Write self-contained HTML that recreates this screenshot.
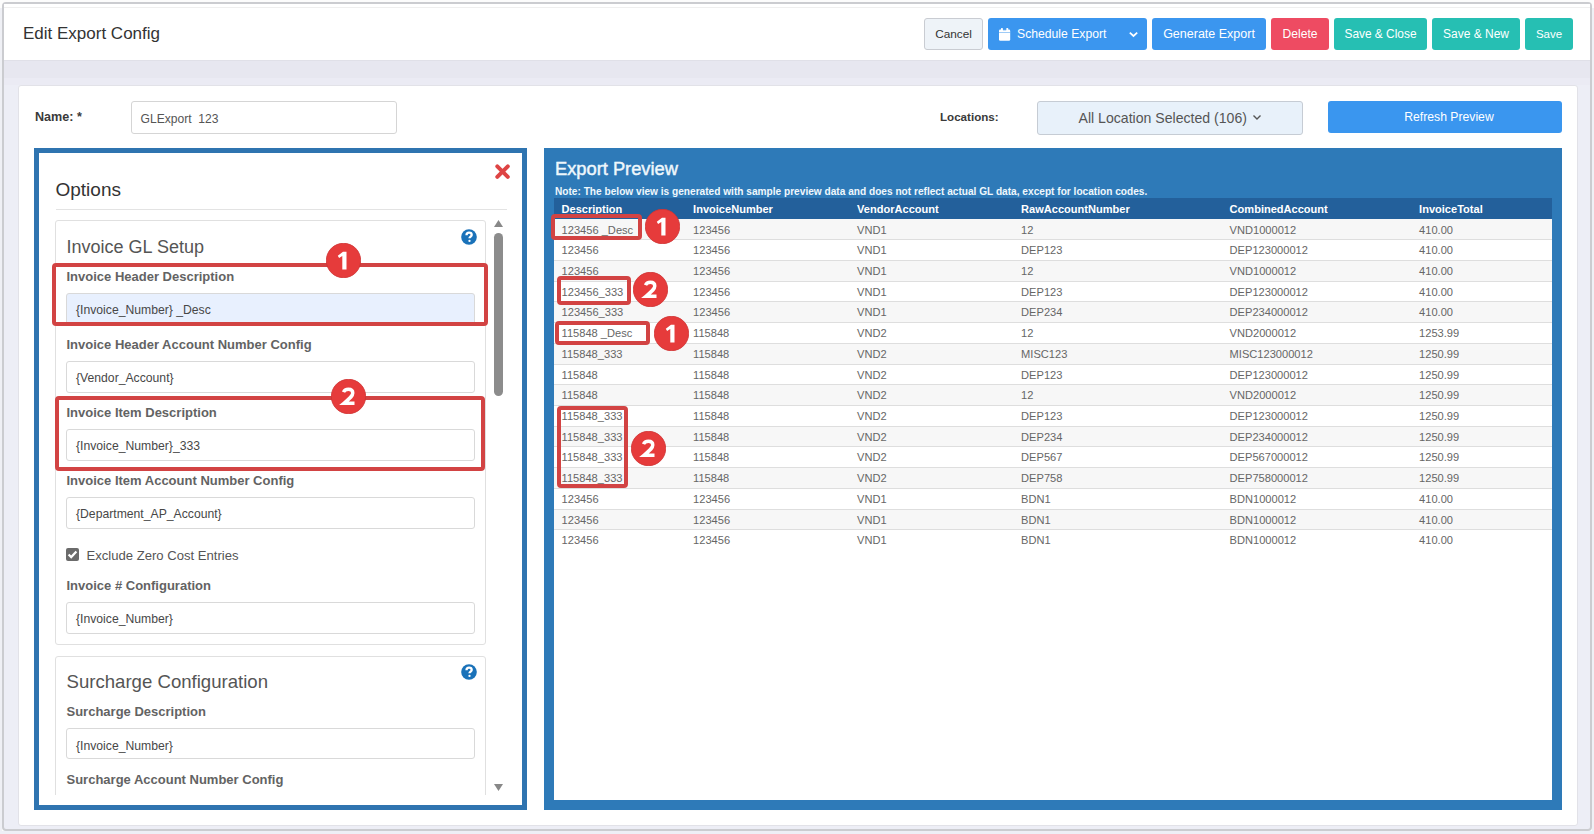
<!DOCTYPE html>
<html><head><meta charset="utf-8"><title>Edit Export Config</title>
<style>
html,body{margin:0;padding:0;}
body{width:1594px;height:834px;position:relative;overflow:hidden;background:#fcfcfc;font-family:"Liberation Sans",sans-serif;}
.b{position:absolute;}
.t{position:absolute;white-space:pre;}
</style></head><body>
<div class="b" style="left:0px;top:831px;width:1594px;height:3px;background:#eeeff6"></div>
<div class="b" style="left:0px;top:8px;width:2px;height:823px;background:#eff0f5"></div>
<div class="b" style="left:1592px;top:8px;width:2px;height:823px;background:#eff0f5"></div>
<div class="b" style="left:2px;top:2px;width:1590px;height:829px;border:2px solid #cbccd0;border-radius:4px;box-sizing:border-box;background:#edeef6"></div>
<div class="b" style="left:4px;top:4px;width:1586px;height:56px;background:#fff"></div>
<div class="b" style="left:4px;top:7px;width:1586px;height:1px;background:#efefef"></div>
<div class="b" style="left:4px;top:60px;width:1586px;height:1px;background:#e0e0e8"></div>
<div class="b" style="left:4px;top:61px;width:1586px;height:17px;background:#e7e7f0"></div>
<div class="b" style="left:4px;top:78px;width:1586px;height:7px;background:#ebebf4"></div>
<div class="t " style="left:23.00px;top:23px;font-size:17px;line-height:21px;color:#333;font-weight:400;">Edit Export Config</div>
<div class="b" style="left:924px;top:18px;width:59px;height:32px;background:#eef3f8;border-radius:3px;border:1px solid #c9ccd2;box-sizing:border-box;"></div>
<div class="t" style="left:753.50px;width:400px;text-align:center;top:27px;font-size:11.8px;line-height:15px;color:#333;font-weight:400;">Cancel</div>
<div class="b" style="left:988px;top:18px;width:159px;height:32px;background:#3b96ef;border-radius:3px"></div>
<div class="t " style="left:1017.00px;top:27px;font-size:12.2px;line-height:15px;color:#fff;font-weight:400;">Schedule Export</div>
<svg class="b" style="left:998px;top:27px" width="13" height="15" viewBox="0 0 13 15"><rect x="1" y="2.6" width="11.2" height="11.2" rx="1.3" fill="#fff"/><rect x="1" y="5.1" width="11.2" height="0.9" fill="#3b96ef" opacity="0.55"/><rect x="3.0" y="1" width="1.8" height="3" rx="0.5" fill="#fff"/><rect x="8.4" y="1" width="1.8" height="3" rx="0.5" fill="#fff"/><rect x="5.0" y="2.2" width="3.2" height="1.1" fill="#3b96ef"/></svg>
<svg class="b" style="left:1128px;top:30px" width="11" height="8" viewBox="0 0 11 8"><path d="M1.8 2.6 L5.5 6 L9.2 2.6" stroke="#fff" stroke-width="1.7" fill="none"/></svg>
<div class="b" style="left:1152px;top:18px;width:114px;height:32px;background:#3b96ef;border-radius:3px;"></div>
<div class="t" style="left:1009.00px;width:400px;text-align:center;top:26px;font-size:12.5px;line-height:16px;color:#fff;font-weight:400;">Generate Export</div>
<div class="b" style="left:1271px;top:18px;width:58px;height:32px;background:#ee4b62;border-radius:3px;"></div>
<div class="t" style="left:1100.00px;width:400px;text-align:center;top:27px;font-size:12.1px;line-height:15px;color:#fff;font-weight:400;">Delete</div>
<div class="b" style="left:1334px;top:18px;width:93px;height:32px;background:#26bfb3;border-radius:3px;"></div>
<div class="t" style="left:1180.50px;width:400px;text-align:center;top:27px;font-size:11.9px;line-height:15px;color:#fff;font-weight:400;">Save &amp; Close</div>
<div class="b" style="left:1432px;top:18px;width:88px;height:32px;background:#26bfb3;border-radius:3px;"></div>
<div class="t" style="left:1276.00px;width:400px;text-align:center;top:27px;font-size:12px;line-height:15px;color:#fff;font-weight:400;">Save &amp; New</div>
<div class="b" style="left:1525px;top:18px;width:48px;height:32px;background:#26bfb3;border-radius:3px;"></div>
<div class="t" style="left:1349.00px;width:400px;text-align:center;top:27px;font-size:11.5px;line-height:14px;color:#fff;font-weight:400;">Save</div>
<div class="b" style="left:18px;top:85px;width:1560px;height:741px;background:#fff;border-radius:3px;border:1px solid #e2e2e8;box-sizing:border-box"></div>
<div class="t " style="left:35.00px;top:109px;font-size:12.6px;line-height:16px;color:#3a3a3a;font-weight:700;">Name: *</div>
<div class="b" style="left:131px;top:101px;width:266px;height:33px;border:1px solid #d5d5d5;border-radius:3px;box-sizing:border-box;background:#fff"></div>
<div class="t " style="left:140.50px;top:112px;font-size:12.1px;line-height:15px;color:#555;font-weight:400;">GLExport&nbsp; 123</div>
<div class="t " style="left:940.00px;top:110px;font-size:11.6px;line-height:14px;color:#3a3a3a;font-weight:700;">Locations:</div>
<div class="b" style="left:1037px;top:101px;width:266px;height:34px;border:1px solid #c6ccd4;border-radius:3px;box-sizing:border-box;background:#e8f1fa"></div>
<div class="t " style="left:1078.50px;top:109px;font-size:14.1px;line-height:18px;color:#555;font-weight:400;">All Location Selected (106)</div>
<svg class="b" style="left:1252px;top:114px" width="10" height="7" viewBox="0 0 10 7"><path d="M1.5 1.5 L5 5 L8.5 1.5" stroke="#555" stroke-width="1.4" fill="none"/></svg>
<div class="b" style="left:1328px;top:101px;width:234px;height:32px;background:#3a96ef;border-radius:3px"></div>
<div class="t" style="left:1249.00px;width:400px;text-align:center;top:110px;font-size:12.2px;line-height:15px;color:#fff;font-weight:400;">Refresh Preview</div>
<div class="b" style="left:34px;top:148px;width:493px;height:662px;border:5px solid #2f74b0;box-sizing:border-box;background:#fff"></div>
<div class="t " style="left:55.50px;top:178px;font-size:19px;line-height:24px;color:#333;font-weight:400;">Options</div>
<svg class="b" style="left:494px;top:163px" width="17" height="17" viewBox="0 0 17 17"><path d="M3.3 3.3 L13.8 13.8 M13.8 3.3 L3.3 13.8" stroke="#de4444" stroke-width="4" stroke-linecap="round"/></svg>
<div class="b" style="left:56px;top:209px;width:451px;height:1px;background:#e3e3e3"></div>
<div class="b" style="left:40px;top:153px;width:482px;height:642px;overflow:hidden">
<div class="b" style="left:15px;top:67px;width:431px;height:425px;border:1px solid #e0e0e0;border-radius:3px;box-sizing:border-box"></div>
<div class="t " style="left:26.50px;top:83px;font-size:18px;line-height:22px;color:#555;font-weight:400;">Invoice GL Setup</div>
<svg class="b" style="left:421px;top:76px" width="16" height="16" viewBox="0 0 16 16"><circle cx="8" cy="8" r="7.8" fill="#1a72b9"/><path d="M5.5 6.3 C5.5 4.6 6.7 3.7 8.1 3.7 C9.7 3.7 10.7 4.7 10.7 5.9 C10.7 7.5 8.5 7.7 8.5 9.3" stroke="#fff" stroke-width="2.3" fill="none"/><circle cx="8.5" cy="11.9" r="1.15" fill="#fff"/></svg>
<div class="t " style="left:26.50px;top:116px;font-size:13px;line-height:16px;color:#636363;font-weight:700;">Invoice Header Description</div>
<div class="b" style="left:26px;top:140px;width:409px;height:32px;border:1px solid #d9d9d9;border-radius:3px;box-sizing:border-box;background:#e8f0fe"></div>
<div class="t " style="left:36.00px;top:150px;font-size:12.2px;line-height:15px;color:#474747;font-weight:400;">{Invoice_Number} _Desc</div>
<div class="t " style="left:26.50px;top:184px;font-size:13px;line-height:16px;color:#636363;font-weight:700;">Invoice Header Account Number Config</div>
<div class="b" style="left:26px;top:208px;width:409px;height:32px;border:1px solid #d9d9d9;border-radius:3px;box-sizing:border-box;background:#fff"></div>
<div class="t " style="left:36.00px;top:218px;font-size:12.2px;line-height:15px;color:#474747;font-weight:400;">{Vendor_Account}</div>
<div class="t " style="left:26.50px;top:252px;font-size:13px;line-height:16px;color:#636363;font-weight:700;">Invoice Item Description</div>
<div class="b" style="left:26px;top:276px;width:409px;height:32px;border:1px solid #d9d9d9;border-radius:3px;box-sizing:border-box;background:#fff"></div>
<div class="t " style="left:36.00px;top:286px;font-size:12.2px;line-height:15px;color:#474747;font-weight:400;">{Invoice_Number}_333</div>
<div class="t " style="left:26.50px;top:320px;font-size:13px;line-height:16px;color:#636363;font-weight:700;">Invoice Item Account Number Config</div>
<div class="b" style="left:26px;top:344px;width:409px;height:31.5px;border:1px solid #d9d9d9;border-radius:3px;box-sizing:border-box;background:#fff"></div>
<div class="t " style="left:36.00px;top:354px;font-size:12.2px;line-height:15px;color:#474747;font-weight:400;">{Department_AP_Account}</div>
<div class="b" style="left:26px;top:395px;width:13px;height:13px;background:#6b6b6b;border-radius:2px"></div>
<svg class="b" style="left:26px;top:395px" width="13" height="13" viewBox="0 0 13 13"><path d="M2.6 6.5 L5.2 9.1 L10.4 3.5" stroke="#fff" stroke-width="2.2" fill="none"/></svg>
<div class="t " style="left:46.50px;top:395px;font-size:13.1px;line-height:16px;color:#555;font-weight:400;">Exclude Zero Cost Entries</div>
<div class="t " style="left:26.50px;top:425px;font-size:13px;line-height:16px;color:#636363;font-weight:700;">Invoice # Configuration</div>
<div class="b" style="left:26px;top:449px;width:409px;height:32px;border:1px solid #d9d9d9;border-radius:3px;box-sizing:border-box;background:#fff"></div>
<div class="t " style="left:36.00px;top:459px;font-size:12.2px;line-height:15px;color:#474747;font-weight:400;">{Invoice_Number}</div>
<div class="b" style="left:15px;top:503px;width:431px;height:244px;border:1px solid #e0e0e0;border-radius:3px;box-sizing:border-box"></div>
<div class="t " style="left:26.50px;top:517px;font-size:18.6px;line-height:23px;color:#555;font-weight:400;">Surcharge Configuration</div>
<svg class="b" style="left:421px;top:511px" width="16" height="16" viewBox="0 0 16 16"><circle cx="8" cy="8" r="7.8" fill="#1a72b9"/><path d="M5.5 6.3 C5.5 4.6 6.7 3.7 8.1 3.7 C9.7 3.7 10.7 4.7 10.7 5.9 C10.7 7.5 8.5 7.7 8.5 9.3" stroke="#fff" stroke-width="2.3" fill="none"/><circle cx="8.5" cy="11.9" r="1.15" fill="#fff"/></svg>
<div class="t " style="left:26.50px;top:551px;font-size:13px;line-height:16px;color:#636363;font-weight:700;">Surcharge Description</div>
<div class="b" style="left:26px;top:575.4px;width:409px;height:31.100000000000023px;border:1px solid #d9d9d9;border-radius:3px;box-sizing:border-box;background:#fff"></div>
<div class="t " style="left:36.00px;top:586px;font-size:12.2px;line-height:15px;color:#474747;font-weight:400;">{Invoice_Number}</div>
<div class="t " style="left:26.50px;top:619px;font-size:13px;line-height:16px;color:#636363;font-weight:700;">Surcharge Account Number Config</div>
</div>
<svg class="b" style="left:493px;top:219px" width="11" height="9" viewBox="0 0 11 9"><path d="M1 8 L5.5 1 L10 8 Z" fill="#888"/></svg>
<div class="b" style="left:494px;top:233px;width:9px;height:163px;background:#8c8c8c;border-radius:4.5px"></div>
<svg class="b" style="left:493px;top:783px" width="11" height="9" viewBox="0 0 11 9"><path d="M1 1 L5.5 8 L10 1 Z" fill="#888"/></svg>
<div class="b" style="left:52px;top:262.5px;width:436px;height:63.0px;border:4px solid #d24343;border-radius:4px;box-sizing:border-box"></div>
<div class="b" style="left:54.5px;top:395.5px;width:430.5px;height:75.0px;border:4px solid #d24343;border-radius:4px;box-sizing:border-box"></div>
<svg class="b" style="left:325.90px;top:242.80px" width="35" height="35" viewBox="-17.5 -17.5 35 35"><circle cx="0" cy="0" r="17.2" fill="#e63b3b" stroke="#cf3434" stroke-width="0.8"/><path d="M-0.5 -8.7 L3.0 -8.7 L3.0 9.0 L-1.2 9.0 L-1.2 -4.4 L-4.4 -2.4 L-5.7 -4.8 Z" fill="#fff"/></svg>
<svg class="b" style="left:331.00px;top:379.20px" width="35" height="35" viewBox="-17.5 -17.5 35 35"><circle cx="0" cy="0" r="17.2" fill="#e63b3b" stroke="#cf3434" stroke-width="0.8"/><path d="M-5.0 -4.4 C-4.0 -6.8 -2.2 -7.2 -0.1 -7.2 C2.7 -7.2 4.3 -5.7 4.3 -3.4 C4.3 -0.8 2.4 1.0 -4.6 6.7 L6.0 6.7" stroke="#fff" stroke-width="3.4" fill="none" stroke-linejoin="miter"/></svg>
<div class="b" style="left:544px;top:148px;width:1018px;height:662px;background:#2e7ab8"></div>
<div class="t " style="left:555.00px;top:157px;font-size:18.3px;line-height:23px;color:#eef7fc;font-weight:400;-webkit-text-stroke:0.45px #eef7fc;">Export Preview</div>
<div class="t " style="left:555.00px;top:185px;font-size:10.15px;line-height:13px;color:#eef7fc;font-weight:700;">Note: The below view is generated with sample preview data and does not reflect actual GL data, except for location codes.</div>
<div class="b" style="left:554px;top:198px;width:998px;height:602px;background:#fff"></div>
<div class="b" style="left:554px;top:198px;width:998px;height:21px;background:#23609b"></div>
<div class="t " style="left:561.60px;top:202px;font-size:11.05px;line-height:14px;color:#fff;font-weight:700;">Description</div>
<div class="t " style="left:693.10px;top:202px;font-size:11.05px;line-height:14px;color:#fff;font-weight:700;">InvoiceNumber</div>
<div class="t " style="left:857.10px;top:202px;font-size:11.05px;line-height:14px;color:#fff;font-weight:700;">VendorAccount</div>
<div class="t " style="left:1021.10px;top:202px;font-size:11.05px;line-height:14px;color:#fff;font-weight:700;">RawAccountNumber</div>
<div class="t " style="left:1229.60px;top:202px;font-size:11.05px;line-height:14px;color:#fff;font-weight:700;">CombinedAccount</div>
<div class="t " style="left:1419.10px;top:202px;font-size:11.05px;line-height:14px;color:#fff;font-weight:700;">InvoiceTotal</div>
<div class="b" style="left:554px;top:219px;width:998px;height:20px;background:#f7f7f7"></div>
<div class="t " style="left:561.60px;top:223px;font-size:11.1px;line-height:14px;color:#666;font-weight:400;">123456 _Desc</div>
<div class="t " style="left:693.10px;top:223px;font-size:11.1px;line-height:14px;color:#666;font-weight:400;">123456</div>
<div class="t " style="left:857.10px;top:223px;font-size:11.1px;line-height:14px;color:#666;font-weight:400;">VND1</div>
<div class="t " style="left:1021.10px;top:223px;font-size:11.1px;line-height:14px;color:#666;font-weight:400;">12</div>
<div class="t " style="left:1229.60px;top:223px;font-size:11.1px;line-height:14px;color:#666;font-weight:400;">VND1000012</div>
<div class="t " style="left:1419.10px;top:223px;font-size:11.1px;line-height:14px;color:#666;font-weight:400;">410.00</div>
<div class="b" style="left:554px;top:239px;width:998px;height:1px;background:#dedede"></div>
<div class="t " style="left:561.60px;top:243px;font-size:11.1px;line-height:14px;color:#666;font-weight:400;">123456</div>
<div class="t " style="left:693.10px;top:243px;font-size:11.1px;line-height:14px;color:#666;font-weight:400;">123456</div>
<div class="t " style="left:857.10px;top:243px;font-size:11.1px;line-height:14px;color:#666;font-weight:400;">VND1</div>
<div class="t " style="left:1021.10px;top:243px;font-size:11.1px;line-height:14px;color:#666;font-weight:400;">DEP123</div>
<div class="t " style="left:1229.60px;top:243px;font-size:11.1px;line-height:14px;color:#666;font-weight:400;">DEP123000012</div>
<div class="t " style="left:1419.10px;top:243px;font-size:11.1px;line-height:14px;color:#666;font-weight:400;">410.00</div>
<div class="b" style="left:554px;top:260px;width:998px;height:21px;background:#f7f7f7"></div>
<div class="b" style="left:554px;top:260px;width:998px;height:1px;background:#dedede"></div>
<div class="t " style="left:561.60px;top:264px;font-size:11.1px;line-height:14px;color:#666;font-weight:400;">123456</div>
<div class="t " style="left:693.10px;top:264px;font-size:11.1px;line-height:14px;color:#666;font-weight:400;">123456</div>
<div class="t " style="left:857.10px;top:264px;font-size:11.1px;line-height:14px;color:#666;font-weight:400;">VND1</div>
<div class="t " style="left:1021.10px;top:264px;font-size:11.1px;line-height:14px;color:#666;font-weight:400;">12</div>
<div class="t " style="left:1229.60px;top:264px;font-size:11.1px;line-height:14px;color:#666;font-weight:400;">VND1000012</div>
<div class="t " style="left:1419.10px;top:264px;font-size:11.1px;line-height:14px;color:#666;font-weight:400;">410.00</div>
<div class="b" style="left:554px;top:281px;width:998px;height:1px;background:#dedede"></div>
<div class="t " style="left:561.60px;top:285px;font-size:11.1px;line-height:14px;color:#666;font-weight:400;">123456_333</div>
<div class="t " style="left:693.10px;top:285px;font-size:11.1px;line-height:14px;color:#666;font-weight:400;">123456</div>
<div class="t " style="left:857.10px;top:285px;font-size:11.1px;line-height:14px;color:#666;font-weight:400;">VND1</div>
<div class="t " style="left:1021.10px;top:285px;font-size:11.1px;line-height:14px;color:#666;font-weight:400;">DEP123</div>
<div class="t " style="left:1229.60px;top:285px;font-size:11.1px;line-height:14px;color:#666;font-weight:400;">DEP123000012</div>
<div class="t " style="left:1419.10px;top:285px;font-size:11.1px;line-height:14px;color:#666;font-weight:400;">410.00</div>
<div class="b" style="left:554px;top:301px;width:998px;height:21px;background:#f7f7f7"></div>
<div class="b" style="left:554px;top:301px;width:998px;height:1px;background:#dedede"></div>
<div class="t " style="left:561.60px;top:305px;font-size:11.1px;line-height:14px;color:#666;font-weight:400;">123456_333</div>
<div class="t " style="left:693.10px;top:305px;font-size:11.1px;line-height:14px;color:#666;font-weight:400;">123456</div>
<div class="t " style="left:857.10px;top:305px;font-size:11.1px;line-height:14px;color:#666;font-weight:400;">VND1</div>
<div class="t " style="left:1021.10px;top:305px;font-size:11.1px;line-height:14px;color:#666;font-weight:400;">DEP234</div>
<div class="t " style="left:1229.60px;top:305px;font-size:11.1px;line-height:14px;color:#666;font-weight:400;">DEP234000012</div>
<div class="t " style="left:1419.10px;top:305px;font-size:11.1px;line-height:14px;color:#666;font-weight:400;">410.00</div>
<div class="b" style="left:554px;top:322px;width:998px;height:1px;background:#dedede"></div>
<div class="t " style="left:561.60px;top:326px;font-size:11.1px;line-height:14px;color:#666;font-weight:400;">115848 _Desc</div>
<div class="t " style="left:693.10px;top:326px;font-size:11.1px;line-height:14px;color:#666;font-weight:400;">115848</div>
<div class="t " style="left:857.10px;top:326px;font-size:11.1px;line-height:14px;color:#666;font-weight:400;">VND2</div>
<div class="t " style="left:1021.10px;top:326px;font-size:11.1px;line-height:14px;color:#666;font-weight:400;">12</div>
<div class="t " style="left:1229.60px;top:326px;font-size:11.1px;line-height:14px;color:#666;font-weight:400;">VND2000012</div>
<div class="t " style="left:1419.10px;top:326px;font-size:11.1px;line-height:14px;color:#666;font-weight:400;">1253.99</div>
<div class="b" style="left:554px;top:343px;width:998px;height:21px;background:#f7f7f7"></div>
<div class="b" style="left:554px;top:343px;width:998px;height:1px;background:#dedede"></div>
<div class="t " style="left:561.60px;top:347px;font-size:11.1px;line-height:14px;color:#666;font-weight:400;">115848_333</div>
<div class="t " style="left:693.10px;top:347px;font-size:11.1px;line-height:14px;color:#666;font-weight:400;">115848</div>
<div class="t " style="left:857.10px;top:347px;font-size:11.1px;line-height:14px;color:#666;font-weight:400;">VND2</div>
<div class="t " style="left:1021.10px;top:347px;font-size:11.1px;line-height:14px;color:#666;font-weight:400;">MISC123</div>
<div class="t " style="left:1229.60px;top:347px;font-size:11.1px;line-height:14px;color:#666;font-weight:400;">MISC123000012</div>
<div class="t " style="left:1419.10px;top:347px;font-size:11.1px;line-height:14px;color:#666;font-weight:400;">1250.99</div>
<div class="b" style="left:554px;top:364px;width:998px;height:1px;background:#dedede"></div>
<div class="t " style="left:561.60px;top:368px;font-size:11.1px;line-height:14px;color:#666;font-weight:400;">115848</div>
<div class="t " style="left:693.10px;top:368px;font-size:11.1px;line-height:14px;color:#666;font-weight:400;">115848</div>
<div class="t " style="left:857.10px;top:368px;font-size:11.1px;line-height:14px;color:#666;font-weight:400;">VND2</div>
<div class="t " style="left:1021.10px;top:368px;font-size:11.1px;line-height:14px;color:#666;font-weight:400;">DEP123</div>
<div class="t " style="left:1229.60px;top:368px;font-size:11.1px;line-height:14px;color:#666;font-weight:400;">DEP123000012</div>
<div class="t " style="left:1419.10px;top:368px;font-size:11.1px;line-height:14px;color:#666;font-weight:400;">1250.99</div>
<div class="b" style="left:554px;top:384px;width:998px;height:21px;background:#f7f7f7"></div>
<div class="b" style="left:554px;top:384px;width:998px;height:1px;background:#dedede"></div>
<div class="t " style="left:561.60px;top:388px;font-size:11.1px;line-height:14px;color:#666;font-weight:400;">115848</div>
<div class="t " style="left:693.10px;top:388px;font-size:11.1px;line-height:14px;color:#666;font-weight:400;">115848</div>
<div class="t " style="left:857.10px;top:388px;font-size:11.1px;line-height:14px;color:#666;font-weight:400;">VND2</div>
<div class="t " style="left:1021.10px;top:388px;font-size:11.1px;line-height:14px;color:#666;font-weight:400;">12</div>
<div class="t " style="left:1229.60px;top:388px;font-size:11.1px;line-height:14px;color:#666;font-weight:400;">VND2000012</div>
<div class="t " style="left:1419.10px;top:388px;font-size:11.1px;line-height:14px;color:#666;font-weight:400;">1250.99</div>
<div class="b" style="left:554px;top:405px;width:998px;height:1px;background:#dedede"></div>
<div class="t " style="left:561.60px;top:409px;font-size:11.1px;line-height:14px;color:#666;font-weight:400;">115848_333</div>
<div class="t " style="left:693.10px;top:409px;font-size:11.1px;line-height:14px;color:#666;font-weight:400;">115848</div>
<div class="t " style="left:857.10px;top:409px;font-size:11.1px;line-height:14px;color:#666;font-weight:400;">VND2</div>
<div class="t " style="left:1021.10px;top:409px;font-size:11.1px;line-height:14px;color:#666;font-weight:400;">DEP123</div>
<div class="t " style="left:1229.60px;top:409px;font-size:11.1px;line-height:14px;color:#666;font-weight:400;">DEP123000012</div>
<div class="t " style="left:1419.10px;top:409px;font-size:11.1px;line-height:14px;color:#666;font-weight:400;">1250.99</div>
<div class="b" style="left:554px;top:426px;width:998px;height:20px;background:#f7f7f7"></div>
<div class="b" style="left:554px;top:426px;width:998px;height:1px;background:#dedede"></div>
<div class="t " style="left:561.60px;top:430px;font-size:11.1px;line-height:14px;color:#666;font-weight:400;">115848_333</div>
<div class="t " style="left:693.10px;top:430px;font-size:11.1px;line-height:14px;color:#666;font-weight:400;">115848</div>
<div class="t " style="left:857.10px;top:430px;font-size:11.1px;line-height:14px;color:#666;font-weight:400;">VND2</div>
<div class="t " style="left:1021.10px;top:430px;font-size:11.1px;line-height:14px;color:#666;font-weight:400;">DEP234</div>
<div class="t " style="left:1229.60px;top:430px;font-size:11.1px;line-height:14px;color:#666;font-weight:400;">DEP234000012</div>
<div class="t " style="left:1419.10px;top:430px;font-size:11.1px;line-height:14px;color:#666;font-weight:400;">1250.99</div>
<div class="b" style="left:554px;top:446px;width:998px;height:1px;background:#dedede"></div>
<div class="t " style="left:561.60px;top:450px;font-size:11.1px;line-height:14px;color:#666;font-weight:400;">115848_333</div>
<div class="t " style="left:693.10px;top:450px;font-size:11.1px;line-height:14px;color:#666;font-weight:400;">115848</div>
<div class="t " style="left:857.10px;top:450px;font-size:11.1px;line-height:14px;color:#666;font-weight:400;">VND2</div>
<div class="t " style="left:1021.10px;top:450px;font-size:11.1px;line-height:14px;color:#666;font-weight:400;">DEP567</div>
<div class="t " style="left:1229.60px;top:450px;font-size:11.1px;line-height:14px;color:#666;font-weight:400;">DEP567000012</div>
<div class="t " style="left:1419.10px;top:450px;font-size:11.1px;line-height:14px;color:#666;font-weight:400;">1250.99</div>
<div class="b" style="left:554px;top:467px;width:998px;height:21px;background:#f7f7f7"></div>
<div class="b" style="left:554px;top:467px;width:998px;height:1px;background:#dedede"></div>
<div class="t " style="left:561.60px;top:471px;font-size:11.1px;line-height:14px;color:#666;font-weight:400;">115848_333</div>
<div class="t " style="left:693.10px;top:471px;font-size:11.1px;line-height:14px;color:#666;font-weight:400;">115848</div>
<div class="t " style="left:857.10px;top:471px;font-size:11.1px;line-height:14px;color:#666;font-weight:400;">VND2</div>
<div class="t " style="left:1021.10px;top:471px;font-size:11.1px;line-height:14px;color:#666;font-weight:400;">DEP758</div>
<div class="t " style="left:1229.60px;top:471px;font-size:11.1px;line-height:14px;color:#666;font-weight:400;">DEP758000012</div>
<div class="t " style="left:1419.10px;top:471px;font-size:11.1px;line-height:14px;color:#666;font-weight:400;">1250.99</div>
<div class="b" style="left:554px;top:488px;width:998px;height:1px;background:#dedede"></div>
<div class="t " style="left:561.60px;top:492px;font-size:11.1px;line-height:14px;color:#666;font-weight:400;">123456</div>
<div class="t " style="left:693.10px;top:492px;font-size:11.1px;line-height:14px;color:#666;font-weight:400;">123456</div>
<div class="t " style="left:857.10px;top:492px;font-size:11.1px;line-height:14px;color:#666;font-weight:400;">VND1</div>
<div class="t " style="left:1021.10px;top:492px;font-size:11.1px;line-height:14px;color:#666;font-weight:400;">BDN1</div>
<div class="t " style="left:1229.60px;top:492px;font-size:11.1px;line-height:14px;color:#666;font-weight:400;">BDN1000012</div>
<div class="t " style="left:1419.10px;top:492px;font-size:11.1px;line-height:14px;color:#666;font-weight:400;">410.00</div>
<div class="b" style="left:554px;top:509px;width:998px;height:20px;background:#f7f7f7"></div>
<div class="b" style="left:554px;top:509px;width:998px;height:1px;background:#dedede"></div>
<div class="t " style="left:561.60px;top:513px;font-size:11.1px;line-height:14px;color:#666;font-weight:400;">123456</div>
<div class="t " style="left:693.10px;top:513px;font-size:11.1px;line-height:14px;color:#666;font-weight:400;">123456</div>
<div class="t " style="left:857.10px;top:513px;font-size:11.1px;line-height:14px;color:#666;font-weight:400;">VND1</div>
<div class="t " style="left:1021.10px;top:513px;font-size:11.1px;line-height:14px;color:#666;font-weight:400;">BDN1</div>
<div class="t " style="left:1229.60px;top:513px;font-size:11.1px;line-height:14px;color:#666;font-weight:400;">BDN1000012</div>
<div class="t " style="left:1419.10px;top:513px;font-size:11.1px;line-height:14px;color:#666;font-weight:400;">410.00</div>
<div class="b" style="left:554px;top:529px;width:998px;height:1px;background:#dedede"></div>
<div class="t " style="left:561.60px;top:533px;font-size:11.1px;line-height:14px;color:#666;font-weight:400;">123456</div>
<div class="t " style="left:693.10px;top:533px;font-size:11.1px;line-height:14px;color:#666;font-weight:400;">123456</div>
<div class="t " style="left:857.10px;top:533px;font-size:11.1px;line-height:14px;color:#666;font-weight:400;">VND1</div>
<div class="t " style="left:1021.10px;top:533px;font-size:11.1px;line-height:14px;color:#666;font-weight:400;">BDN1</div>
<div class="t " style="left:1229.60px;top:533px;font-size:11.1px;line-height:14px;color:#666;font-weight:400;">BDN1000012</div>
<div class="t " style="left:1419.10px;top:533px;font-size:11.1px;line-height:14px;color:#666;font-weight:400;">410.00</div>
<div class="b" style="left:550.7px;top:214px;width:91.79999999999995px;height:26px;border:4px solid #d24343;border-radius:4px;box-sizing:border-box"></div>
<div class="b" style="left:557px;top:276px;width:74px;height:29px;border:4px solid #d24343;border-radius:4px;box-sizing:border-box"></div>
<div class="b" style="left:555px;top:321px;width:95px;height:24px;border:4px solid #d24343;border-radius:4px;box-sizing:border-box"></div>
<div class="b" style="left:557px;top:406px;width:71.20000000000005px;height:81.5px;border:4px solid #d24343;border-radius:4px;box-sizing:border-box"></div>
<svg class="b" style="left:645.20px;top:209.10px" width="35" height="35" viewBox="-17.5 -17.5 35 35"><circle cx="0" cy="0" r="17.2" fill="#e63b3b" stroke="#cf3434" stroke-width="0.8"/><path d="M-0.5 -8.7 L3.0 -8.7 L3.0 9.0 L-1.2 9.0 L-1.2 -4.4 L-4.4 -2.4 L-5.7 -4.8 Z" fill="#fff"/></svg>
<svg class="b" style="left:632.70px;top:272.20px" width="35" height="35" viewBox="-17.5 -17.5 35 35"><circle cx="0" cy="0" r="17.2" fill="#e63b3b" stroke="#cf3434" stroke-width="0.8"/><path d="M-5.0 -4.4 C-4.0 -6.8 -2.2 -7.2 -0.1 -7.2 C2.7 -7.2 4.3 -5.7 4.3 -3.4 C4.3 -0.8 2.4 1.0 -4.6 6.7 L6.0 6.7" stroke="#fff" stroke-width="3.4" fill="none" stroke-linejoin="miter"/></svg>
<svg class="b" style="left:653.90px;top:315.50px" width="35" height="35" viewBox="-17.5 -17.5 35 35"><circle cx="0" cy="0" r="17.2" fill="#e63b3b" stroke="#cf3434" stroke-width="0.8"/><path d="M-0.5 -8.7 L3.0 -8.7 L3.0 9.0 L-1.2 9.0 L-1.2 -4.4 L-4.4 -2.4 L-5.7 -4.8 Z" fill="#fff"/></svg>
<svg class="b" style="left:631.10px;top:431.10px" width="35" height="35" viewBox="-17.5 -17.5 35 35"><circle cx="0" cy="0" r="17.2" fill="#e63b3b" stroke="#cf3434" stroke-width="0.8"/><path d="M-5.0 -4.4 C-4.0 -6.8 -2.2 -7.2 -0.1 -7.2 C2.7 -7.2 4.3 -5.7 4.3 -3.4 C4.3 -0.8 2.4 1.0 -4.6 6.7 L6.0 6.7" stroke="#fff" stroke-width="3.4" fill="none" stroke-linejoin="miter"/></svg>
</body></html>
